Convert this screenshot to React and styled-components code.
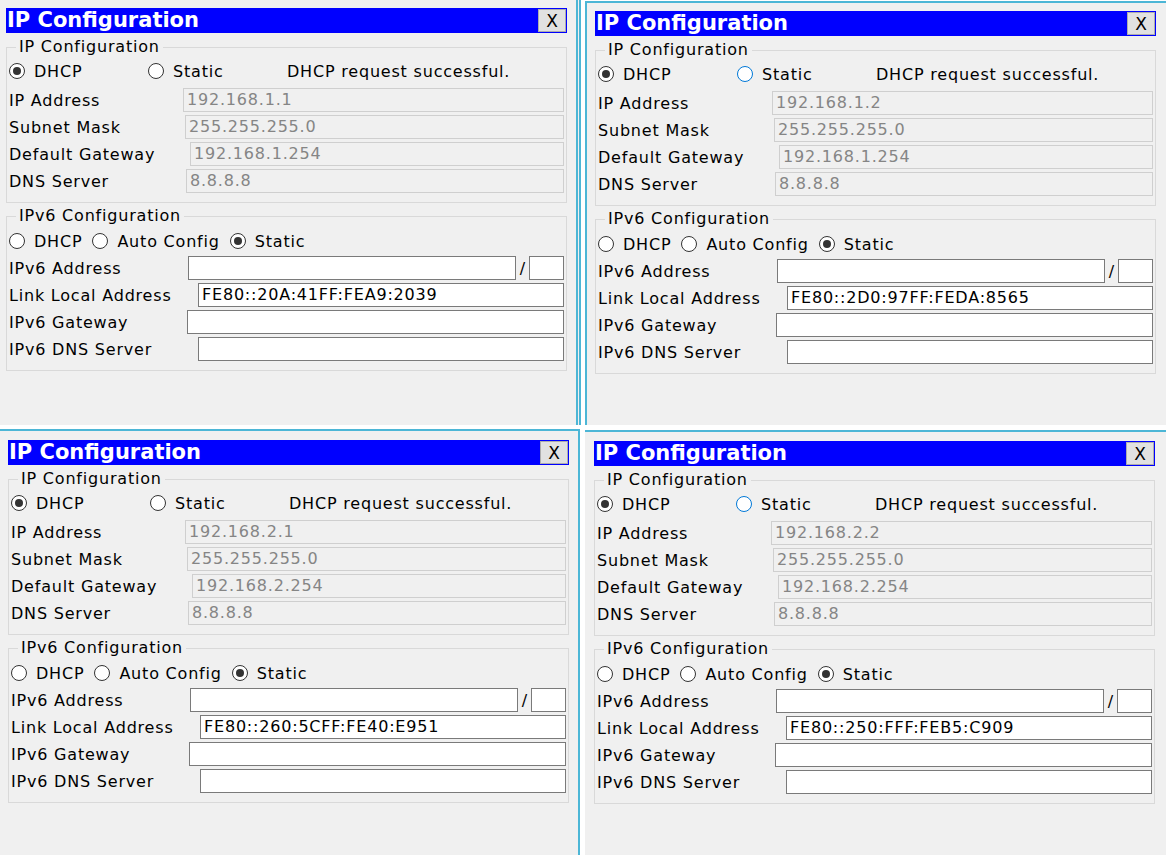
import React from 'react';
import styled, { createGlobalStyle } from 'styled-components';

const Global = createGlobalStyle`
  body {
    margin: 0;
    background: #ffffff;
    font-family: "DejaVu Sans", Verdana, sans-serif;
  }
`

const Page = styled.div`
  display: grid;
  grid-template-columns: 581px 581px;
  grid-template-rows: 425px 426px;
  column-gap: 4px;
  row-gap: 4px;
  width: 1174px;
  height: 866px;
  background: #ffffff;
`

const Shot = styled.div`
  box-sizing: border-box;
  background: #f0f0f0;
  padding: ${p => p.$pad};
  margin-top: ${p => p.$shift || 0}px;
  border-top: ${p => (p.$top ? '2px solid #4cb6d6' : 'none')};
  border-left: ${p => (p.$left ? '2px solid #4cb6d6' : 'none')};
  border-right: ${p => p.$right || 'none'};
  width: ${p => p.$w}px;
`

const Window = styled.div`
  width: 561px;
  display: flex;
  flex-direction: column;
  color: #000;
  font-size: 16px;
  letter-spacing: 0.8px;
`

const TitleBar = styled.div`
  box-sizing: border-box;
  height: 25px;
  background: #0000ff;
  padding: 1px;
  display: flex;
  align-items: center;
  justify-content: space-between;
`

const Title = styled.div`
  color: #ffffff;
  font-weight: bold;
  font-size: 21px;
  letter-spacing: 0;
  line-height: 23px;
`

const CloseBtn = styled.div`
  box-sizing: border-box;
  width: 28px;
  height: 23px;
  background: #e1e1e1;
  border: 1px solid #adadad;
  display: flex;
  align-items: center;
  justify-content: center;
  font-size: 17px;
  letter-spacing: 0;
`

const Group = styled.fieldset`
  margin: ${p => p.$mt}px 0 0 0;
  padding: 0 2px 9px 2px;
  border: 1px solid #d9d9d9;
  min-width: 0;
`

const Legend = styled.legend`
  margin-left: 7px;
  padding: 0 3px;
  font-size: 16px;
  line-height: 18px;
`

const ChoiceRow = styled.div`
  height: 24px;
  margin-top: ${p => p.$mt}px;
  display: ${p => (p.$grid ? 'grid' : 'flex')};
  grid-template-columns: 139px 139px auto;
  gap: ${p => (p.$grid ? 0 : 10)}px;
  align-items: center;
`

const Choice = styled.div`
  display: flex;
  align-items: center;
  gap: 9px;
  white-space: nowrap;
`

const Dot = styled.span`
  flex: none;
  box-sizing: border-box;
  width: 16px;
  height: 16px;
  border-radius: 50%;
  border: 1px solid ${p => (p.$focus ? '#0078d7' : '#333333')};
  background: #ffffff;
  display: flex;
  align-items: center;
  justify-content: center;
  &::after {
    content: '';
    width: 8px;
    height: 8px;
    border-radius: 50%;
    background: ${p => (p.$on ? '#333333' : 'transparent')};
  }
`

const Status = styled.span`
  white-space: nowrap;
`

const Rows = styled.div`
  display: flex;
  flex-direction: column;
  gap: 3px;
  margin-top: ${p => p.$mt}px;
`

const Row = styled.div`
  display: flex;
  align-items: center;
  height: 24px;
`

const Label = styled.span`
  flex: none;
  width: ${p => p.$w}px;
  white-space: nowrap;
`

const Field = styled.div`
  box-sizing: border-box;
  flex: ${p => (p.$fixed ? 'none' : 1)};
  width: ${p => (p.$fixed ? `${p.$fixed}px` : 'auto')};
  height: 24px;
  padding: 0 3px;
  line-height: 22px;
  white-space: nowrap;
  overflow: hidden;
  background: ${p => (p.$off ? '#f0f0f0' : '#ffffff')};
  border: 1px solid ${p => (p.$off ? '#cfcfcf' : '#7a7a7a')};
  color: ${p => (p.$off ? '#858585' : '#000000')};
`

const Slash = styled.span`
  flex: none;
  width: 13px;
  text-align: center;
  letter-spacing: 0;
`

const Radio = ({ on, focus, children }) => (
  <Choice>
    <Dot $on={on} $focus={focus} />
    <span>{children}</span>
  </Choice>
)

const ConfigWindow = ({ ip, gw, ll, focus }) => (
  <Window>
    <TitleBar>
      <Title>IP Configuration</Title>
      <CloseBtn>X</CloseBtn>
    </TitleBar>

    <Group $mt={5}>
      <Legend>IP Configuration</Legend>
      <ChoiceRow $grid $mt={3}>
        <Radio on>DHCP</Radio>
        <Radio focus={focus}>Static</Radio>
        <Status>DHCP request successful.</Status>
      </ChoiceRow>
      <Rows $mt={5}>
        <Row><Label $w={174}>IP Address</Label><Field $off>{ip}</Field></Row>
        <Row><Label $w={176}>Subnet Mask</Label><Field $off>255.255.255.0</Field></Row>
        <Row><Label $w={181}>Default Gateway</Label><Field $off>{gw}</Field></Row>
        <Row><Label $w={177}>DNS Server</Label><Field $off>8.8.8.8</Field></Row>
      </Rows>
    </Group>

    <Group $mt={4}>
      <Legend>IPv6 Configuration</Legend>
      <ChoiceRow $mt={4}>
        <Radio>DHCP</Radio>
        <Radio>Auto Config</Radio>
        <Radio on>Static</Radio>
      </ChoiceRow>
      <Rows $mt={3}>
        <Row>
          <Label $w={179}>IPv6 Address</Label>
          <Field />
          <Slash>/</Slash>
          <Field $fixed={35} />
        </Row>
        <Row><Label $w={189}>Link Local Address</Label><Field>{ll}</Field></Row>
        <Row><Label $w={178}>IPv6 Gateway</Label><Field /></Row>
        <Row><Label $w={189}>IPv6 DNS Server</Label><Field /></Row>
      </Rows>
    </Group>
  </Window>
)

export default function App() {
  return (
    <Page>
      <Global />
      <Shot $w={581} $pad="8px 0 0 6px" $right="5px double #4cb6d6">
        <ConfigWindow ip="192.168.1.1" gw="192.168.1.254" ll="FE80::20A:41FF:FEA9:2039" />
      </Shot>
      <Shot $w={581} $shift={1} $top $left $pad="8px 0 0 8px">
        <ConfigWindow ip="192.168.1.2" gw="192.168.1.254" ll="FE80::2D0:97FF:FEDA:8565" focus />
      </Shot>
      <Shot $w={580} $top $right="2px solid #4cb6d6" $pad="9px 0 0 8px">
        <ConfigWindow ip="192.168.2.1" gw="192.168.2.254" ll="FE80::260:5CFF:FE40:E951" />
      </Shot>
      <Shot $w={581} $shift={1} $top $pad="9px 0 0 9px">
        <ConfigWindow ip="192.168.2.2" gw="192.168.2.254" ll="FE80::250:FFF:FEB5:C909" focus />
      </Shot>
    </Page>
  );
}
